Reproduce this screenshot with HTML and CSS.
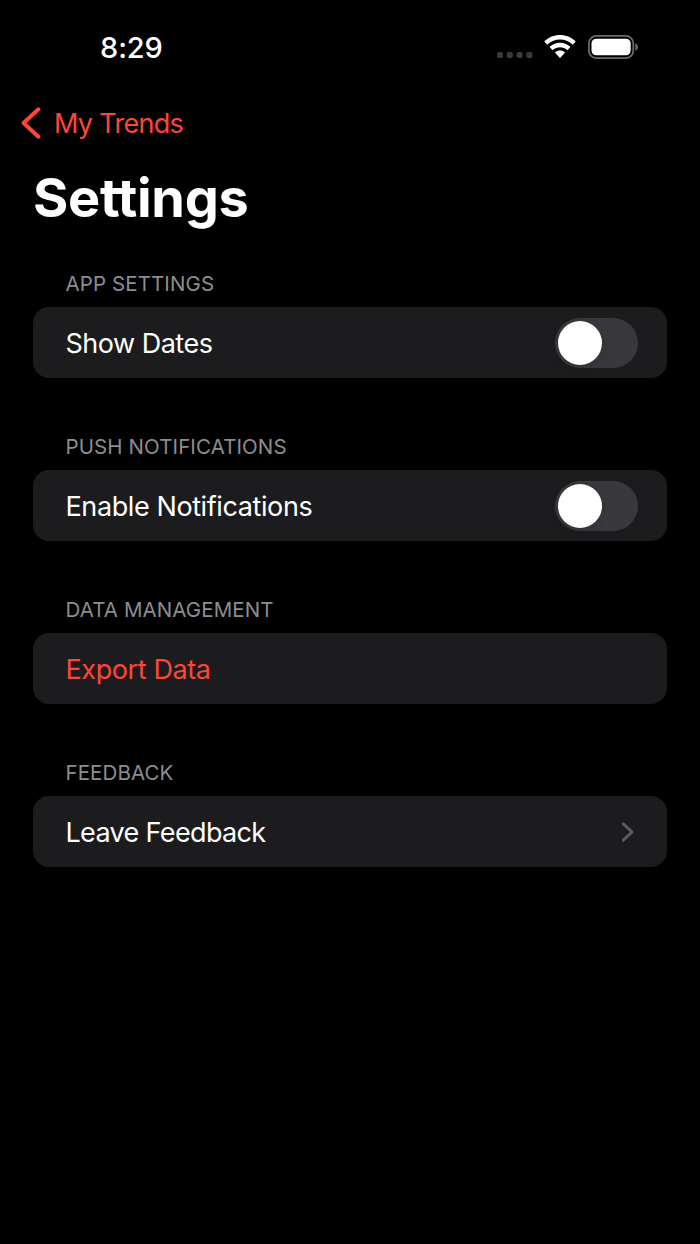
FILE: index.html
```html
<!DOCTYPE html>
<html lang="en">
<head>
    <meta charset="UTF-8">
    <meta name="viewport" content="width=device-width, initial-scale=1.0">
    <title>Settings</title>
    <link rel="stylesheet" href="styles.css">
</head>
<body>
    <div class="status-bar">
        <span class="time">8:29</span>
        <div class="status-icons">
            <svg class="signal" width="36" height="6" viewBox="0 0 36 6">
                <rect x="0" y="0" width="6" height="6" rx="1.8"/>
                <rect x="9.8" y="0" width="6" height="6" rx="1.8"/>
                <rect x="19.6" y="0" width="6" height="6" rx="1.8"/>
                <rect x="29.4" y="0" width="6" height="6" rx="1.8"/>
            </svg>
            <svg class="wifi" width="32" height="24" viewBox="0 0 32 24">
                <path d="M16 0C10.100 0 4.700 2.300 .7 6.100C.4 6.400 .4 6.800 .7 7.100L2.800 9.200C3.100 9.500 3.500 9.500 3.800 9.200C7 6.200 11.300 4.500 16 4.500S25 6.200 28.200 9.200C28.500 9.500 28.900 9.500 29.200 9.200L31.300 7.100C31.600 6.800 31.600 6.400 31.300 6.100C27.300 2.300 21.900 0 16 0Z"/>
                <path d="M16 7.800C12.200 7.800 8.700 9.200 6 11.600C5.700 11.900 5.700 12.300 6 12.600L8.100 14.700C8.400 15 8.700 15 9 14.700C10.900 13.100 13.300 12.200 16 12.200S21.100 13.100 23 14.700C23.300 15 23.600 15 23.900 14.700L26 12.600C26.300 12.300 26.300 11.900 26 11.600C23.300 9.200 19.800 7.800 16 7.800Z"/>
                <path d="M16 15.500C14.200 15.500 12.600 16.100 11.300 17.100C11 17.400 11 17.800 11.300 18.100L15.500 22.600C15.800 22.900 16.200 22.900 16.500 22.600L20.700 18.100C21 17.800 21 17.400 20.700 17.100C19.400 16.100 17.800 15.500 16 15.500Z"/>
            </svg>
            <svg class="battery" width="50" height="24" viewBox="0 0 50 24">
                <rect class="battery-case" x=".9" y=".9" width="44.400" height="22.200" rx="7.400"/>
                <rect x="3.500" y="3.700" width="39.200" height="16.600" rx="4.800"/>
                <path class="battery-cap" d="M47.300 8.200C48.900 8.800 50 10.300 50 12S48.900 15.200 47.300 15.800Z"/>
            </svg>
        </div>
    </div>

    <a class="back" href="#">
        <svg width="20" height="32" viewBox="0 0 20 32">
            <path d="M17.400 2.300L2.600 16L17.400 29.700"/>
        </svg>
        <span class="back-label">My Trends</span>
    </a>

    <h1>Settings</h1>

    <section class="group">
        <h2>App Settings</h2>
        <div class="row">
            <span>Show Dates</span>
            <span class="toggle" role="switch" aria-checked="false"></span>
        </div>
    </section>

    <section class="group">
        <h2>Push Notifications</h2>
        <div class="row">
            <span class="text-notifications">Enable Notifications</span>
            <span class="toggle" role="switch" aria-checked="false"></span>
        </div>
    </section>

    <section class="group">
        <h2>Data Management</h2>
        <div class="row">
            <span class="text-export">Export Data</span>
        </div>
    </section>

    <section class="group">
        <h2>Feedback</h2>
        <div class="row">
            <span class="text-feedback">Leave Feedback</span>
            <svg class="chevron" width="14" height="22" viewBox="0 0 14 22">
                <path d="M2.300 2.800L11 11L2.300 19.200"/>
            </svg>
        </div>
    </section>
</body>
</html>
```

FILE: styles.css
```css
* {
    box-sizing: border-box;
}

body {
    font-family: Inter, "Liberation Sans", sans-serif;
    background: #000000;
    color: #ffffff;
    margin: 0;
    min-height: 1244px;
}

svg {
    display: block;
    flex: none;
    fill: #ffffff;
}

.status-bar {
    display: flex;
    justify-content: space-between;
    height: 96px;
    padding: 31px 62px 0 100px;
}

.time {
    font-size: 29px;
    font-weight: 550;
    line-height: 34px;
    letter-spacing: -0.1px;
}

.status-icons {
    display: flex;
    align-items: flex-start;
    padding-top: 4px;
}

.signal {
    fill: #3a3a3a;
    margin: 17px 11px 0 0;
}

.wifi {
    margin-right: 12px;
}

.battery-case {
    fill: none;
    stroke: #6b6b6b;
    stroke-width: 1.8;
}

.battery-cap {
    fill: #6b6b6b;
}

.back {
    display: flex;
    align-items: center;
    gap: 13px;
    height: 54px;
    padding-left: 21px;
    color: #ff453a;
    text-decoration: none;
}

.back svg path {
    fill: none;
    stroke: #ff453a;
    stroke-width: 4;
    stroke-linecap: round;
    stroke-linejoin: round;
}

.back-label {
    font-size: 27px;
    letter-spacing: -0.7px;
}

h1 {
    margin: 16px 0 1px 33px;
    font-size: 54px;
    font-weight: 700;
    line-height: 64px;
    letter-spacing: -0.3px;
}

.group {
    margin: 0 33px;
    padding-top: 39px;
    height: 163px;
}

h2 {
    margin: 0 0 9px;
    padding-left: 32.500px;
    color: #8d8d93;
    font-size: 20.500px;
    font-weight: 400;
    line-height: 28px;
    letter-spacing: 0.1px;
    text-transform: uppercase;
}

.row {
    display: flex;
    align-items: center;
    justify-content: space-between;
    height: 71px;
    padding: 1px 29px 0 32.500px;
    background: #1c1c1e;
    border-radius: 16px;
    font-size: 27px;
    letter-spacing: -0.5px;
}

.text-notifications,
.text-export {
    letter-spacing: -0.4px;
}

.text-export {
    color: #ff453a;
}

.text-feedback {
    letter-spacing: -0.65px;
}

.toggle {
    width: 83px;
    height: 50px;
    padding: 3px;
    background: #39393d;
    border-radius: 25px;
}

.toggle::before {
    content: "";
    display: block;
    width: 44px;
    height: 44px;
    background: #ffffff;
    border-radius: 50%;
    box-shadow: 0 3px 8px rgba(0, 0, 0, 0.15);
}

.chevron {
    margin-right: 3px;
}

.chevron path {
    fill: none;
    stroke: #5a5a5e;
    stroke-width: 3;
    stroke-linecap: round;
    stroke-linejoin: round;
}
```
